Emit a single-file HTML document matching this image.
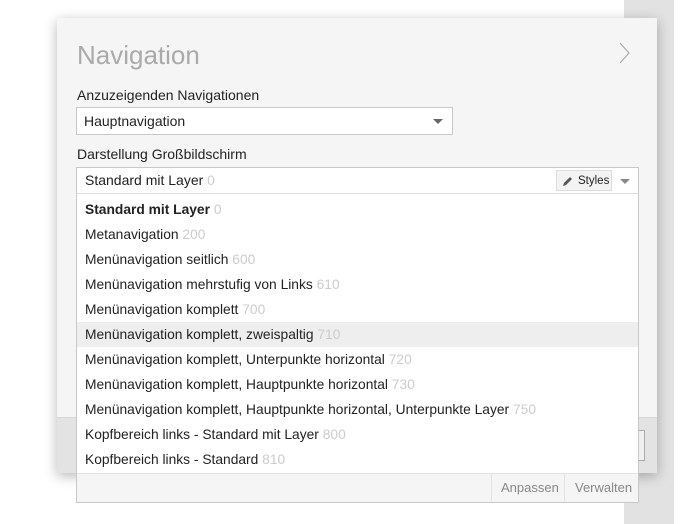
<!DOCTYPE html>
<html><head><meta charset="utf-8"><style>
*{margin:0;padding:0;box-sizing:border-box}
body{width:680px;height:524px;overflow:hidden;background:#fff;font-family:"Liberation Sans",sans-serif;position:relative}
.strip{position:absolute;left:624px;top:0;width:50px;height:524px;background:#e2e2e2}
.dlg{position:absolute;left:57px;top:18px;width:600px;height:455px;background:#f5f5f5;box-shadow:0 3px 12px rgba(0,0,0,.28)}
.foot{position:absolute;left:0;top:399px;width:600px;height:56px;background:#e3e3e3;border-top:1px solid #d6d6d6}
.btn{position:absolute;left:580px;top:12px;width:8px;height:31px;border:1px solid #aaa;border-left:none;background:#f0f0f0}
h1{position:absolute;left:20px;top:22px;font-size:26px;font-weight:normal;color:#aaa}
.chev{position:absolute;left:560px;top:22px}
.lbl{position:absolute;left:20px;font-size:14px;color:#222}
.sel{position:absolute;background:#fff;border:1px solid #c8c8c8;font-size:14px;color:#222}
.arr{position:absolute;width:0;height:0;border-left:5px solid transparent;border-right:5px solid transparent;border-top:5px solid #666}
.g{color:#ccc}
.list{position:absolute;left:76px;top:193px;width:563px;height:310px;background:#fff;border:1px solid #c8c8c8;border-top:1px solid #ddd}
.it{position:absolute;left:0;width:561px;height:25px;line-height:25px;padding-left:8px;font-size:13.8px;color:#222}
.lf{position:absolute;left:0;top:279px;width:561px;height:29px;background:#f5f5f5;border-top:1px solid #e2e2e2}
.lf span{position:absolute;top:0;height:28px;line-height:28px;font-size:13px;color:#888;border-left:1px solid #e2e2e2}
</style></head><body>
<div class="strip"></div>
<div class="dlg">
<h1>Navigation</h1>
<svg class="chev" width="14" height="26" viewBox="0 0 14 26"><path d="M3 3 L12 13 L3 23" fill="none" stroke="#aaa" stroke-width="1.2"/></svg>
<div class="lbl" style="top:69px">Anzuzeigenden Navigationen</div>
<div class="lbl" style="top:128px">Darstellung Großbildschirm</div>
<div class="foot"><div class="btn"></div></div>
</div>
<div class="sel" style="left:76px;top:107px;width:377px;height:28px;line-height:26px;padding-left:7px">Hauptnavigation<div class="arr" style="left:356px;top:11px"></div></div>
<div class="sel" style="left:76px;top:167px;width:563px;height:27px;line-height:25px;padding-left:8px">Standard mit Layer <span class="g">0</span>
<div style="position:absolute;left:479px;top:2px;width:56px;height:21px;border:1px solid #ddd;background:#f3f3f3;font-size:11.5px;line-height:20px;padding-left:21px;color:#222">Styles<svg style="position:absolute;left:5px;top:5px" width="11" height="11" viewBox="0 0 11 11"><path d="M1 10 L2 7 L8 1 L10 3 L4 9 Z" fill="#555"/></svg></div>
<div class="arr" style="left:543px;top:11px;border-top-color:#888"></div></div>
<div class="list">
<div class="it" style="top:3px;font-weight:bold">Standard mit Layer <span class="g" style="font-weight:normal">0</span></div>
<div class="it" style="top:28px">Metanavigation <span class="g">200</span></div>
<div class="it" style="top:53px">Menünavigation seitlich <span class="g">600</span></div>
<div class="it" style="top:78px">Menünavigation mehrstufig von Links <span class="g">610</span></div>
<div class="it" style="top:103px">Menünavigation komplett <span class="g">700</span></div>
<div class="it" style="top:128px;background:#eee">Menünavigation komplett, zweispaltig <span class="g">710</span></div>
<div class="it" style="top:153px">Menünavigation komplett, Unterpunkte horizontal <span class="g">720</span></div>
<div class="it" style="top:178px">Menünavigation komplett, Hauptpunkte horizontal <span class="g">730</span></div>
<div class="it" style="top:203px">Menünavigation komplett, Hauptpunkte horizontal, Unterpunkte Layer <span class="g">750</span></div>
<div class="it" style="top:228px">Kopfbereich links - Standard mit Layer <span class="g">800</span></div>
<div class="it" style="top:253px">Kopfbereich links - Standard <span class="g">810</span></div>
<div class="lf"><span style="left:414px;padding-left:9px;width:74px">Anpassen</span><span style="left:487px;padding-left:10px;width:74px">Verwalten</span></div>
</div>
</body></html>
